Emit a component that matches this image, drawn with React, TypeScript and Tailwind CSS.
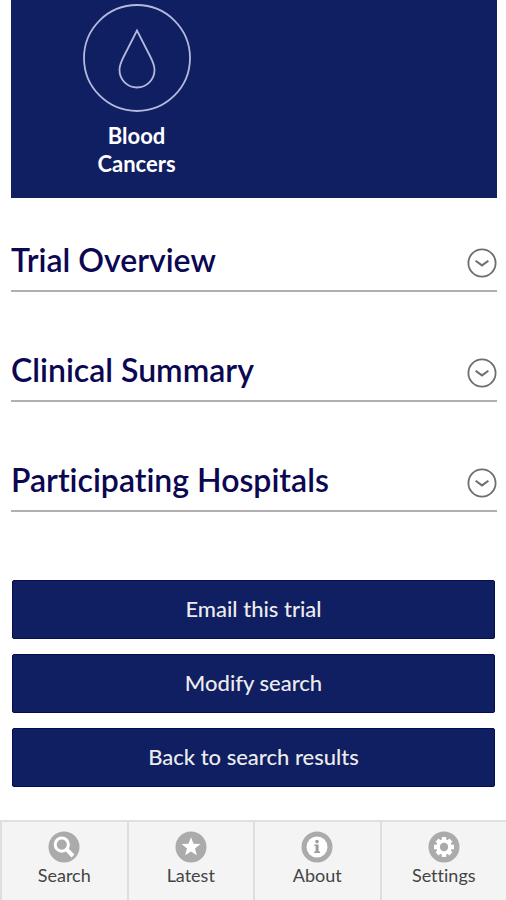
import { useState } from "react";

const sections = ["Trial Overview", "Clinical Summary", "Participating Hospitals"];
const actions = ["Email this trial", "Modify search", "Back to search results"];

function SearchIcon() {
  return (
    <svg viewBox="0 0 32 32" className="size-8" aria-hidden="true">
      <circle cx="16" cy="16" r="15.5" fill="#ababab" />
      <circle cx="13.8" cy="13.6" r="6.6" fill="none" stroke="#fff" strokeWidth="3" />
      <path d="M18.4 18.2L25 25" stroke="#fff" strokeWidth="4" />
    </svg>
  );
}

function StarIcon() {
  return (
    <svg viewBox="0 0 32 32" className="size-8" aria-hidden="true">
      <circle cx="16" cy="16" r="15.5" fill="#ababab" />
      <path
        d="M16 6.2l2.5 6.6 7 .3-5.5 4.4 1.9 6.8-5.9-3.9-5.9 3.9 1.9-6.8-5.5-4.4 7-.3z"
        fill="#fff"
      />
    </svg>
  );
}

function InfoIcon() {
  return (
    <svg viewBox="0 0 32 32" className="size-8" aria-hidden="true">
      <circle cx="16" cy="16" r="15.5" fill="#ababab" />
      <circle cx="16" cy="16" r="10.5" fill="#fff" />
      <circle cx="16" cy="10.6" r="1.8" fill="#9c9c9c" />
      <path d="M13.4 13.6h4.2v7h1.4v1.4h-5.8v-1.4h1.4v-5.6h-1.2z" fill="#9c9c9c" />
    </svg>
  );
}

function GearIcon() {
  return (
    <svg viewBox="0 0 32 32" className="size-8" aria-hidden="true">
      <circle cx="16" cy="16" r="15.5" fill="#ababab" />
      <g stroke="#fff" strokeWidth="4.4">
        <path d="M16 6v20M6 16h20" />
        <path d="M9.1 9.1l13.8 13.8M22.9 9.1L9.1 22.9" />
      </g>
      <circle cx="16" cy="16" r="7.8" fill="#fff" />
      <circle cx="16" cy="16" r="4.2" fill="#ababab" />
    </svg>
  );
}

const tabs = [
  { label: "Search", Icon: SearchIcon },
  { label: "Latest", Icon: StarIcon },
  { label: "About", Icon: InfoIcon },
  { label: "Settings", Icon: GearIcon },
];

function Section({ title }: { title: string }) {
  const [open, setOpen] = useState(false);

  return (
    <h2 className="border-b-2 border-[#b0b0b0] text-[32px] leading-9 font-semibold text-[#0b0752]">
      <button
        type="button"
        aria-expanded={open}
        onClick={() => setOpen(!open)}
        className="flex w-full items-end justify-between pb-3 text-left"
      >
        {title}
        <svg
          viewBox="0 0 30 30"
          className={open ? "size-[30px] rotate-180" : "size-[30px]"}
          fill="none"
          stroke="#6e6e6e"
          aria-hidden="true"
        >
          <circle cx="15" cy="15" r="13.6" strokeWidth="1.8" />
          <path d="M8.6 12.8l6.4 4.6 6.4-4.6" strokeWidth="2" />
        </svg>
      </button>
    </h2>
  );
}

export default function App() {
  return (
    <div className="flex min-h-screen flex-col bg-white font-['Lato',sans-serif] [font-variant-ligatures:none]">
      <main className="flex flex-col pr-[9px] pb-8 pl-[11px]">
        <div className="flex bg-[#101e62] px-2 pt-1 pb-5">
          <div className="flex w-1/2 flex-col items-center gap-2.5">
            <svg
              viewBox="0 0 108 108"
              className="size-[108px]"
              fill="none"
              stroke="#b3b9de"
              strokeWidth="1.8"
              aria-hidden="true"
            >
              <circle cx="54" cy="54" r="53" />
              <path d="M54 26.5L40.500 53C38 58 36.500 61.500 36.500 66a17.500 17.500 0 0 0 35 0C71.500 61.500 70 58 67.500 53z" />
            </svg>
            <p className="text-center text-[22px] leading-7 font-bold text-white">
              Blood
              <br />
              Cancers
            </p>
          </div>
        </div>

        <div className="flex flex-col gap-[60px] pt-11">
          {sections.map((title) => (
            <Section key={title} title={title} />
          ))}
        </div>

        <div className="flex flex-col gap-[15px] pt-[68px] pr-0.5 pl-px">
          {actions.map((label) => (
            <button
              key={label}
              type="button"
              className="h-[59px] rounded-xs border border-[#070b50] bg-[#101e62] pb-0.5 text-[22px] font-medium text-[#ececec]"
            >
              {label}
            </button>
          ))}
        </div>
      </main>

      <nav className="mt-auto grid grid-cols-4 border-t-2 border-[#e0e0e0] bg-[#f4f4f4]">
        {tabs.map(({ label, Icon }) => (
          <a
            key={label}
            href="#"
            className="flex h-[78px] flex-col items-center border-l-2 border-[#dedede] pt-[9px] text-[18px] leading-6 text-[#444]"
          >
            <Icon />
            {label}
          </a>
        ))}
      </nav>
    </div>
  );
}
